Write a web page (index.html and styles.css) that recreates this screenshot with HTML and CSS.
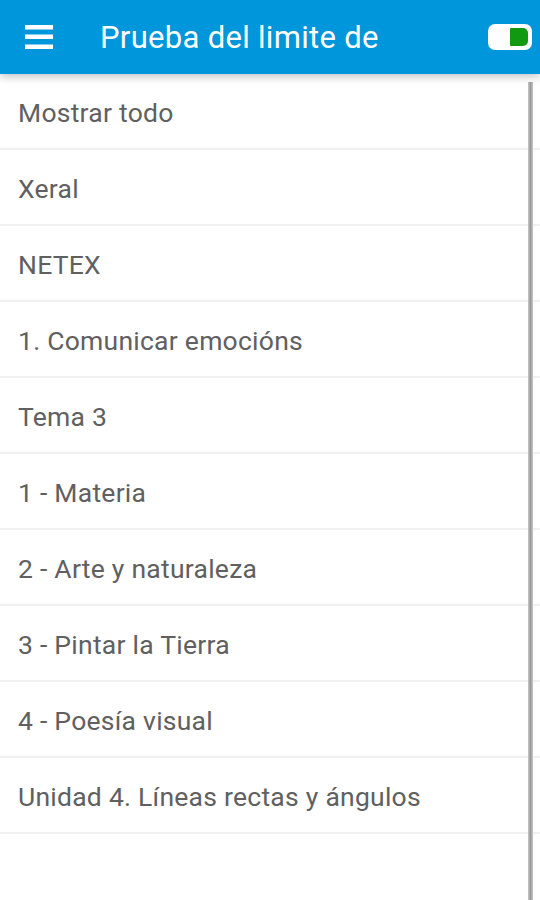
FILE: index.html
```html
<!DOCTYPE html>
<html lang="es">
<head>
<meta charset="utf-8">
<title>Prueba del limite de</title>
<link rel="stylesheet" href="styles.css">
</head>
<body>
<div class="app">
  <header class="bar">
    <svg class="menu" width="28" height="24" viewBox="0 0 28 24" aria-hidden="true">
      <rect x="0" y="0" width="28" height="4.5" fill="#fff"/>
      <rect x="0" y="9.5" width="28" height="4.5" fill="#fff"/>
      <rect x="0" y="19.5" width="28" height="4.5" fill="#fff"/>
    </svg>
    <h1 class="title">Prueba del limite de</h1>
    <span class="toggle"><span class="knob"></span></span>
  </header>
  <main class="content">
    <ul class="list">
      <li class="item">Mostrar todo</li>
      <li class="item">Xeral</li>
      <li class="item">NETEX</li>
      <li class="item">1. Comunicar emocións</li>
      <li class="item">Tema 3</li>
      <li class="item">1 - Materia</li>
      <li class="item">2 - Arte y naturaleza</li>
      <li class="item">3 - Pintar la Tierra</li>
      <li class="item">4 - Poesía visual</li>
      <li class="item">Unidad 4. Líneas rectas y ángulos</li>
    </ul>
    <div class="scrollbar"></div>
  </main>
</div>
</body>
</html>
```
FILE: styles.css
```css
* { box-sizing: border-box; }
html, body {
  margin: 0;
  padding: 0;
  background: #fff;
}
body {
  font-family: Roboto, "Liberation Sans", Arial, sans-serif;
  width: 540px;
  height: 900px;
  overflow: hidden;
}
.app {
  position: relative;
  height: 900px;
}
.bar {
  position: relative;
  z-index: 2;
  height: 74px;
  background: #0096dc;
  display: flex;
  align-items: center;
  padding: 0 0 0 25px;
  box-shadow: 0 3px 8px rgba(0, 0, 0, 0.22);
}
.menu {
  flex: none;
  display: block;
}
.title {
  margin: 0 0 0 47px;
  font-weight: 400;
  font-size: 31px;
  letter-spacing: 0.3px;
  color: #fff;
  flex: 1;
  white-space: nowrap;
}
.toggle {
  flex: none;
  width: 44px;
  height: 26px;
  margin-right: 8px;
  background: #fff;
  border-radius: 7px;
  display: flex;
  align-items: center;
  justify-content: flex-end;
  padding-right: 4px;
}
.knob {
  width: 18px;
  height: 18px;
  background: #119911;
  border-radius: 1px 5px 5px 1px;
}
.content {
  position: relative;
}
.list {
  list-style: none;
  margin: 0;
  padding: 0;
}
.item {
  height: 76px;
  display: flex;
  align-items: center;
  padding-left: 18px;
  padding-top: 2px;
  font-size: 26.5px;
  letter-spacing: 0.25px;
  color: #606060;
  border-bottom: 2px solid #f0f0f0;
}
.scrollbar {
  position: absolute;
  top: 8px;
  right: 7px;
  width: 5px;
  height: 830px;
  background: linear-gradient(to right, #c8c8c8, #9a9a9a 50%, #c8c8c8);
}
```
